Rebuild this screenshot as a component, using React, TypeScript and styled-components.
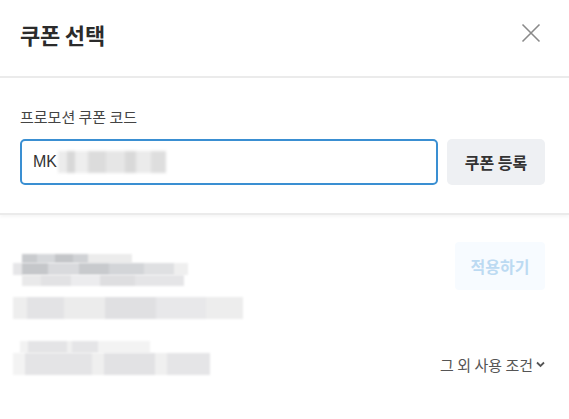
import React from "react";
import styled, { createGlobalStyle } from "styled-components";

const GlobalStyle = createGlobalStyle`
  html, body { margin: 0; padding: 0; background: #ffffff; }
  body {
    font-family: "Noto Sans CJK KR", "Noto Sans", "Liberation Sans", sans-serif;
    color: #222;
    -webkit-font-smoothing: antialiased;
  }
  * { box-sizing: border-box; }
`;

const Modal = styled.div`
  width: 569px;
  height: 419px;
  background: #fff;
  display: flex;
  flex-direction: column;
  overflow: hidden;
`;

const Header = styled.header`
  height: 78px;
  padding: 18px 27px 0 20px;
  display: flex;
  justify-content: space-between;
  align-items: flex-start;
  border-bottom: 2px solid #ebebeb;
`;

const Title = styled.h1`
  margin: 0;
  font-size: 22px;
  line-height: 32px;
  font-weight: 700;
  color: #2b2b2b;
  letter-spacing: -0.2px;
`;

const CloseButton = styled.button`
  width: 22px;
  height: 22px;
  margin-top: 4px;
  padding: 0;
  border: none;
  background: transparent;
  display: flex;
  align-items: center;
  justify-content: center;
  cursor: pointer;
`;

const CodeSection = styled.section`
  padding: 27px 24px 28px 20px;
  border-bottom: 2px solid #ebebeb;
  box-shadow: 0 2px 3px rgba(0, 0, 0, 0.04);
`;

const Label = styled.div`
  font-size: 15px;
  line-height: 23px;
  color: #444;
  margin-bottom: 11px;
`;

const InputRow = styled.div`
  display: flex;
  gap: 9px;
  height: 46px;
`;

const CodeField = styled.div`
  flex: 1;
  border: 2px solid #3a8fd2;
  border-radius: 5px;
  display: flex;
  align-items: center;
  padding-left: 11px;
  font-family: "Liberation Sans", "Noto Sans CJK KR", sans-serif;
  font-size: 16px;
  color: #333;
`;

const Mask = styled.span<{ $w: number }>`
  display: inline-block;
  width: ${(p) => p.$w}px;
  height: 22px;
  margin-left: 1px;
  background: linear-gradient(
    90deg,
    #ececec 0 8%,
    #d8d8d8 8% 16%,
    #eeeeee 16% 28%,
    #dcdcdc 28% 44%,
    #e6e6e6 44% 62%,
    #d9d9d9 62% 72%,
    #ebebeb 72% 86%,
    #dedede 86% 100%
  );
  filter: blur(1.5px);
`;

const RegisterButton = styled.button`
  width: 98px;
  border: none;
  border-radius: 5px;
  background: #eef0f3;
  color: #333;
  font-family: inherit;
  font-size: 16px;
  font-weight: 700;
  cursor: pointer;
`;

const CouponItem = styled.div`
  padding: 27px 24px 0 13px;
  display: grid;
  grid-template-columns: 1fr auto;
  grid-template-rows: auto auto;
`;

const InfoColumn = styled.div`
  display: flex;
  flex-direction: column;
  gap: 11px;
  grid-row: 1 / span 2;
  padding-top: 12px;
`;

const BlurBlock = styled.div<{ $w: number; $h: number; $tone: string; $indent?: number }>`
  width: ${(p) => p.$w}px;
  height: ${(p) => p.$h}px;
  margin-left: ${(p) => p.$indent ?? 0}px;
  background: ${(p) => p.$tone};
  filter: blur(1.2px);
`;

const BlurGroup = styled.div<{ $gapTop?: number }>`
  margin-top: ${(p) => p.$gapTop ?? 0}px;
`;

const ApplyButton = styled.button`
  width: 90px;
  height: 48px;
  border: none;
  border-radius: 4px;
  background: #f7fbff;
  color: #bcdaf2;
  font-family: inherit;
  font-size: 16px;
  font-weight: 700;
  align-self: start;
  justify-self: end;
`;

const MoreLink = styled.div`
  align-self: end;
  justify-self: end;
  display: flex;
  align-items: center;
  gap: 3px;
  font-size: 15px;
  color: #555;
`;

const rowA =
  "linear-gradient(90deg, #c9cbce 0 14%, #d6d8db 14% 30%, #c4c6c9 30% 46%, #d0d2d5 46% 60%, #ececec 60% 100%)";
const rowB =
  "linear-gradient(90deg, #e6e6e8 0 5%, #c5c7ca 5% 20%, #d9dadd 20% 38%, #c8cacd 38% 55%, #d3d5d8 55% 75%, #dfe0e2 75% 92%, #efefef 92% 100%)";
const rowC =
  "linear-gradient(90deg, #e9e9ea 0 12%, #e2e2e4 12% 30%, #ececee 30% 48%, #dedee0 48% 70%, #e5e5e7 70% 100%)";
const rowD =
  "linear-gradient(90deg, #eeeeee 0 6%, #e3e3e5 6% 22%, #ececec 22% 40%, #e0e0e2 40% 62%, #e8e8ea 62% 84%, #ededed 84% 100%)";
const rowE =
  "linear-gradient(90deg, #f2f2f2 0 6%, #e4e4e6 6% 36%, #f0f0f0 36% 40%, #e5e5e7 40% 60%, #f3f3f3 60% 100%)";
const rowF =
  "linear-gradient(90deg, #f3f3f3 0 6%, #e4e4e6 6% 40%, #efefef 40% 46%, #e2e2e4 46% 72%, #f0f0f0 72% 78%, #e5e5e7 78% 100%)";

function Chevron() {
  return (
    <svg width="9" height="7" viewBox="0 0 9 7" aria-hidden="true">
      <path d="M1 1.5 L4.5 5 L8 1.5" fill="none" stroke="#555" strokeWidth="1.8" />
    </svg>
  );
}

export default function App() {
  return (
    <>
      <GlobalStyle />
      <Modal>
        <Header>
          <Title>쿠폰 선택</Title>
          <CloseButton aria-label="닫기">
            <svg width="20" height="20" viewBox="0 0 20 20">
              <path d="M1.5 1.5 L18.5 18.5 M18.5 1.5 L1.5 18.5" stroke="#8a8a8a" strokeWidth="1.6" />
            </svg>
          </CloseButton>
        </Header>

        <CodeSection>
          <Label>프로모션 쿠폰 코드</Label>
          <InputRow>
            <CodeField>
              MK
              <Mask $w={108} />
            </CodeField>
            <RegisterButton>쿠폰 등록</RegisterButton>
          </InputRow>
        </CodeSection>

        <CouponItem>
          <InfoColumn>
            <BlurGroup>
              <BlurBlock $w={110} $h={9} $tone={rowA} $indent={9} />
              <BlurBlock $w={175} $h={12} $tone={rowB} />
              <BlurBlock $w={162} $h={11} $tone={rowC} $indent={9} />
            </BlurGroup>
            <BlurBlock $w={230} $h={22} $tone={rowD} />
            <BlurGroup $gapTop={11}>
              <BlurBlock $w={130} $h={12} $tone={rowE} $indent={7} />
              <BlurBlock $w={197} $h={22} $tone={rowF} />
            </BlurGroup>
          </InfoColumn>
          <ApplyButton>적용하기</ApplyButton>
          <MoreLink>
            그 외 사용 조건 <Chevron />
          </MoreLink>
        </CouponItem>
      </Modal>
    </>
  );
}
